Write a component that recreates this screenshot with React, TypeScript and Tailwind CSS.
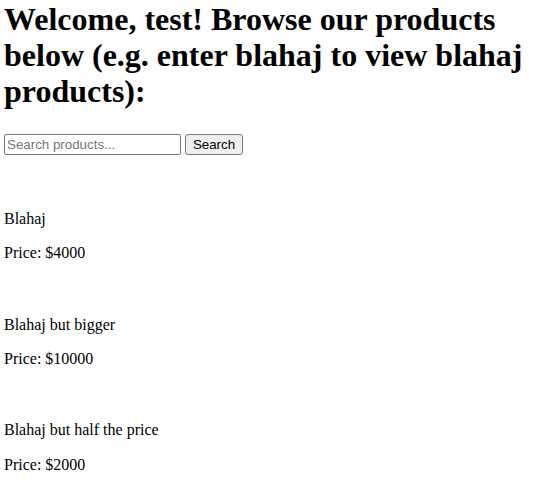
import { useState } from 'react';

const products = [
  { name: 'Blahaj', price: 4000 },
  { name: 'Blahaj but bigger', price: 10000 },
  { name: 'Blahaj but half the price', price: 2000 },
];

function App() {
  const [query, setQuery] = useState('');

  return (
    <div className="min-h-screen bg-white text-black px-[4px] pt-[1px] font-['Liberation_Serif','Times_New_Roman',serif]">
      <h1 className="text-[32px] font-bold leading-[36px]">
        Welcome, test! Browse our products below (e.g. enter blahaj to view blahaj products):
      </h1>

      {/* search form */}
      <form className="mt-[25px] flex items-center gap-[4px]" onSubmit={(e) => e.preventDefault()}>
        <input
          type="text"
          placeholder="Search products..."
          value={query}
          onChange={(e) => setQuery(e.target.value)}
          className="w-[177px] h-[21px] border border-[#767676] rounded-[2px] px-[2px] text-[13.33px] font-['Liberation_Sans',Arial,sans-serif] placeholder:text-[#757575] outline-none"
        />
        <button
          type="submit"
          className="w-[58px] h-[21px] border border-[#767676] rounded-[3px] bg-[#efefef] text-[13.33px] leading-none font-['Liberation_Sans',Arial,sans-serif]"
        >
          Search
        </button>
      </form>

      {/* product list */}
      <div className="mt-[55px] flex flex-col gap-[52.8px]">
        {products.map((p) => (
          <div key={p.name} className="flex flex-col gap-4 text-[16px] leading-[18.4px]">
            <p>{p.name}</p>
            <p>Price: ${p.price}</p>
          </div>
        ))}
      </div>
    </div>
  );
}

export default App;
